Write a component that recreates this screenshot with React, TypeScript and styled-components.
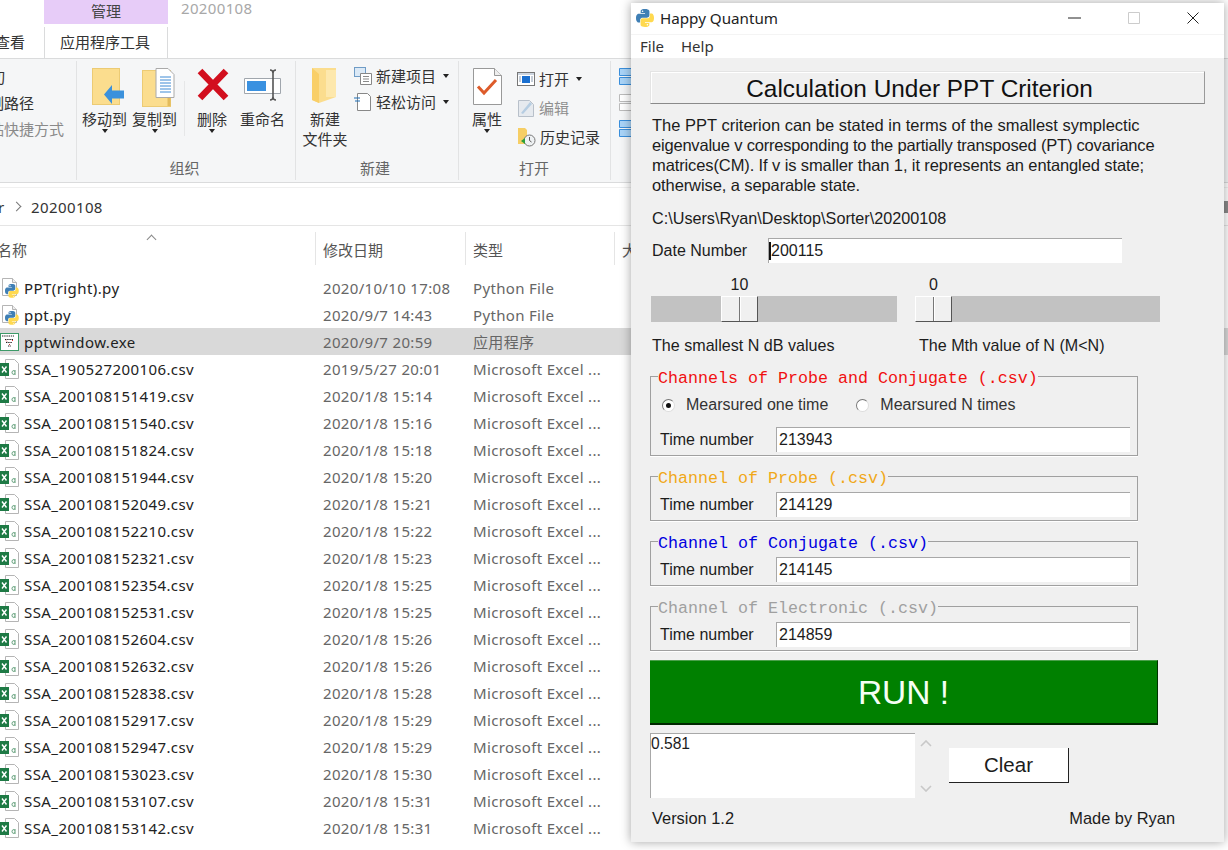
import React from 'react';
import styled, { createGlobalStyle } from 'styled-components';

const GlobalStyle = createGlobalStyle`
  * { box-sizing: border-box; }
  html, body { margin: 0; padding: 0; background: #fff; overflow: hidden; }
`;

const Desktop = styled.div`
  position: relative;
  width: 1228px;
  height: 850px;
  overflow: hidden;
  background: #fff;
  font-family: 'Noto Sans', 'Noto Sans CJK SC', sans-serif;
`;

/* ---------- explorer behind the window ---------- */

const CJK = `'Noto Sans CJK SC', 'Noto Sans', sans-serif`;

const ContextStrip = styled.div`
  display: flex;
  height: 24px;
  padding-left: 44px;
`;

const ManageTab = styled.div`
  width: 124px;
  background: #e7ccf8;
  color: #444;
  font: 15px/22px ${CJK};
  text-align: center;
`;

const FolderTitle = styled.div`
  margin-left: 13px;
  margin-top: -4px;
  color: #a8a8a8;
  font-size: 15px;
  line-height: 24px;
  letter-spacing: 0.35px;
`;

const TabStrip = styled.div`
  display: flex;
  height: 34px;
  margin-left: -6px;
`;

const Tab = styled.div<{ $active?: boolean; $width: number; $ml?: number }>`
  flex: none;
  width: ${(p) => p.$width}px;
  margin: 3px 0 0 ${(p) => p.$ml ?? 0}px;
  padding-right: ${(p) => (p.$active ? 2 : 0)}px;
  background: #fff;
  color: #333;
  font: 15px/30px ${CJK};
  text-align: center;
  white-space: nowrap;
  border: solid ${(p) => (p.$active ? '#dadbdc' : 'transparent')};
  border-width: 0 1px;
`;

const Ribbon = styled.div`
  display: flex;
  height: 125px;
  background: #f5f6f7;
  border-top: 1px solid #dadbdc;
  border-bottom: 1px solid #dadbdc;
  font: 15px/20px ${CJK};
  color: #333;
`;

const RibbonGroup = styled.div<{ $width: number }>`
  position: relative;
  display: flex;
  flex-direction: column;
  flex: none;
  width: ${(p) => p.$width}px;
  height: 119px;
  margin-top: 2px;
  border-right: 1px solid #e2e3e4;
`;

const GroupBody = styled.div<{ $left?: number }>`
  display: flex;
  flex: 1;
  padding: 7px 0 0 ${(p) => p.$left ?? 0}px;
`;

const GroupLabel = styled.div<{ $shift?: number }>`
  height: 22px;
  padding-right: ${(p) => p.$shift ?? 0}px;
  color: #666;
  text-align: center;
`;

const LargeButton = styled.div<{ $width: number; $ml?: number }>`
  display: flex;
  flex-direction: column;
  align-items: center;
  flex: none;
  width: ${(p) => p.$width}px;
  margin-left: ${(p) => p.$ml ?? 0}px;
  white-space: nowrap;
  text-align: center;
`;

const LargeIcon = styled.div<{ $shift?: number }>`
  display: flex;
  align-items: flex-start;
  justify-content: center;
  height: 41px;
  margin-left: ${(p) => p.$shift ?? 0}px;
`;

const Caret = styled.span`
  display: block;
  flex: none;
  width: 0;
  height: 0;
  border: 3.5px solid transparent;
  border-top: 4px solid #222;
  border-bottom: 0;
`;

const RibbonDivider = styled.div`
  flex: none;
  width: 1px;
  height: 55px;
  margin: 13px 12px 0 7px;
  background: #e6e7e8;
`;

const CutLines = styled.div`
  display: flex;
  flex-direction: column;
  gap: 6px;
  margin-top: -1px;
  white-space: nowrap;
`;

const CutLine = styled.div<{ $indent: number; $muted?: boolean }>`
  margin-left: ${(p) => p.$indent}px;
  color: ${(p) => (p.$muted ? '#8a8a8a' : '#333')};
`;

const SideColumn = styled.div<{ $ml: number; $gap: number; $mt: number }>`
  display: flex;
  flex-direction: column;
  gap: ${(p) => p.$gap}px;
  margin: ${(p) => p.$mt}px 0 0 ${(p) => p.$ml}px;
`;

const SideItem = styled.div<{ $muted?: boolean; $ml?: number }>`
  display: flex;
  align-items: center;
  gap: 4px;
  height: 20px;
  margin-left: ${(p) => p.$ml ?? 0}px;
  color: ${(p) => (p.$muted ? '#8f8f8f' : '#333')};
  white-space: nowrap;
  ${Caret} { margin-left: 3px; }
`;

const AddressBar = styled.div`
  display: flex;
  align-items: center;
  height: 39px;
  margin-top: 4px;
  border-top: 1px solid #f0f0f0;
  border-bottom: 1px solid #e5e5e5;
  color: #333;
  font-size: 15px;
  letter-spacing: 0.4px;
`;

const Crumb = styled.span`
  margin-left: -2px;
  width: 12px;
`;

const Chevron = styled.span`
  display: block;
  width: 7px;
  height: 7px;
  margin: 0 11px 0 3px;
  border: solid #777;
  border-width: 1.5px 1.5px 0 0;
  transform: rotate(45deg);
`;

const SearchEdge = styled.span`
  width: 4px;
  height: 12px;
  margin-left: auto;
  background: #8a8a8a;
`;

const ListHeader = styled.div`
  position: relative;
  display: grid;
  grid-template-columns: 323px 150px 149px 40px;
  height: 35px;
  margin-top: 6px;
  color: #555;
  font: 15px/35px ${CJK};
`;

const HeaderCell = styled.div`
  position: relative;
`;

const HeaderName = styled.span`
  margin-left: -3px;
`;

const HeaderSep = styled.span`
  position: absolute;
  top: 0;
  right: 7px;
  width: 1px;
  height: 33px;
  background: #e5e5e5;
`;

const SortArrow = styled.span`
  position: absolute;
  top: 4px;
  left: 148px;
  width: 7px;
  height: 7px;
  border: solid #888;
  border-width: 1px 0 0 1px;
  transform: rotate(45deg);
`;

const FileList = styled.div`
  margin-top: 7px;
`;

const FileRow = styled.div<{ $selected?: boolean }>`
  display: grid;
  grid-template-columns: 24px 299px 150px 1fr;
  align-items: center;
  height: 27px;
  background: ${(p) => (p.$selected ? '#d9d9d9' : 'transparent')};
  font-size: 15px;
`;

const FileIconCell = styled.div`
  display: flex;
  align-items: center;
  height: 27px;
`;

const FileName = styled.div`
  color: #222;
  letter-spacing: 0.42px;
`;

const FileMeta = styled.div`
  color: #666;
  letter-spacing: 0.33px;
`;

/* ---------- the Happy Quantum window ---------- */

const AppWindow = styled.div`
  position: absolute;
  left: 631px;
  top: 3px;
  width: 593px;
  height: 839px;
  background: #f0f0f0;
  box-shadow: 0 0 10px rgba(0, 0, 0, 0.36);
  font-family: 'Liberation Sans', Arial, sans-serif;
  color: #1c1c1c;
`;

const TitleBar = styled.div`
  display: flex;
  align-items: center;
  height: 32px;
  padding: 0 2px 2px 5px;
  background: #fff;
  border-bottom: 1px solid #f4f4f4;
  font: 15.2px/30px 'Noto Sans', sans-serif;
  color: #222;
`;

const WindowTitle = styled.span`
  margin-left: 6px;
  flex: 1;
`;

const WindowControl = styled.div`
  display: flex;
  align-items: center;
  justify-content: center;
  width: 59px;
  height: 30px;
`;

const MenuBar = styled.div`
  display: flex;
  gap: 17px;
  height: 23px;
  padding-left: 9px;
  background: #fff;
  font: 15px/23px 'Noto Sans', sans-serif;
  color: #333;
`;

const WindowBody = styled.div`
  padding: 13px 0 0 19px;
  font-size: 16px;
  line-height: 20px;
`;

const Heading = styled.div`
  width: 555px;
  height: 33px;
  padding-right: 16px;
  background: #f0f0f0;
  border: 1px solid;
  border-color: #e4e4e4 #9a9a9a #8a8a8a #e4e4e4;
  box-shadow: inset 1px 1px 0 #fff;
  color: #111;
  font-size: 24.4px;
  line-height: 33px;
  text-align: center;
`;

const Description = styled.div`
  margin: 11px 0 0 2px;
  font-size: 16.5px;
`;

const DescriptionLine = styled.div<{ $spacing: number }>`
  letter-spacing: ${(p) => p.$spacing}px;
  white-space: nowrap;
`;

const PathText = styled.div`
  margin: 13px 0 0 2px;
  font-size: 16.2px;
`;

const FieldRow = styled.div<{ $mt?: number; $ml?: number }>`
  display: flex;
  align-items: center;
  margin: ${(p) => p.$mt ?? 0}px 0 0 ${(p) => p.$ml ?? 0}px;
`;

const FieldLabel = styled.div<{ $width: number }>`
  flex: none;
  width: ${(p) => p.$width}px;
`;

const TextField = styled.div<{ $width: number }>`
  position: relative;
  flex: none;
  width: ${(p) => p.$width}px;
  height: 25px;
  padding-left: 2px;
  background: #fff;
  border-top: 1px solid #a8a8a8;
  border-left: 1px solid #a8a8a8;
  line-height: 24px;
  font-size: 16px;
`;

const TextCursor = styled.span`
  position: absolute;
  left: 0;
  top: 3px;
  width: 2px;
  height: 18px;
  background: #111;
`;

const SliderGrid = styled.div`
  display: grid;
  grid-template-columns: 246px 245px;
  gap: 18px;
  margin: 12px 0 0 1px;
`;

const SliderValue = styled.div<{ $pos: number }>`
  width: 37px;
  margin-left: ${(p) => p.$pos}px;
  text-align: center;
  margin-bottom: 1px;
`;

const SliderTrack = styled.div`
  height: 26px;
  background: #c2c2c2;
`;

const SliderThumb = styled.div<{ $pos: number }>`
  width: 37px;
  height: 26px;
  margin-left: ${(p) => p.$pos}px;
  background: linear-gradient(90deg, #f0f0f0 0 17px, #777 17px 18px, #fff 18px 19px, #f0f0f0 19px);
  border: 1px solid;
  border-color: #fff #555 #555 #fff;
`;

const SliderCaptions = styled.div`
  display: grid;
  grid-template-columns: 267px 260px;
  margin: 13px 0 0 2px;
  font-size: 16.1px;
`;

const Group = styled.fieldset<{ $mt: number }>`
  width: 488px;
  margin: ${(p) => p.$mt}px 0 0;
  padding: 0 0 3px 9px;
  border: 1px solid #a0a0a0;
  box-shadow: 0 1px 0 #fff;
`;

const Legend = styled.legend<{ $color: string }>`
  position: relative;
  top: 1px;
  margin-left: -2px;
  padding: 3px 0 0;
  color: ${(p) => p.$color};
  font-family: 'Liberation Mono', monospace;
  font-size: 16.67px;
  line-height: 20px;
`;

const RadioRow = styled.div`
  display: flex;
  align-items: center;
  height: 20px;
  margin: 7px 0 0 2px;
  color: #333;
`;

const Radio = styled.span<{ $checked?: boolean; $ml?: number }>`
  display: flex;
  align-items: center;
  justify-content: center;
  flex: none;
  width: 13px;
  height: 13px;
  margin: 0 11px 0 ${(p) => p.$ml ?? 0}px;
  background: #fff;
  border: 1px solid;
  border-color: #777 #ddd #ddd #777;
  border-radius: 50%;
  &::after {
    content: '';
    display: ${(p) => (p.$checked ? 'block' : 'none')};
    width: 5px;
    height: 5px;
    background: #111;
    border-radius: 50%;
  }
`;

const RunButton = styled.div`
  width: 508px;
  height: 65px;
  margin-top: 9px;
  background: #008000;
  border-top: 1px solid #4aa04a;
  border-right: 1px solid #003000;
  border-bottom: 2px solid #002800;
  color: #f4fff4;
  font-size: 33.5px;
  line-height: 64px;
  text-align: center;
`;

const OutputRow = styled.div`
  display: flex;
  margin-top: 8px;
`;

const OutputBox = styled.div`
  flex: none;
  width: 265px;
  height: 65px;
  background: #fff;
  border-top: 1px solid #a8a8a8;
  border-left: 1px solid #a8a8a8;
  font-size: 15.6px;
  line-height: 20px;
`;

const ScrollColumn = styled.div`
  display: flex;
  flex-direction: column;
  justify-content: space-between;
  align-items: center;
  width: 18px;
  height: 52px;
  margin: 7px 0 0 2px;
`;

const ClearButton = styled.div`
  width: 120px;
  height: 35px;
  margin: 15px 0 0 14px;
  background: #fff;
  border-right: 1px solid #222;
  border-bottom: 1px solid #222;
  font-size: 20.5px;
  line-height: 34px;
  text-align: center;
`;

const FooterRow = styled.div`
  display: flex;
  justify-content: space-between;
  width: 523px;
  margin: 10px 0 0 2px;
  font-size: 16.4px;
`;

/* ---------- drawings ---------- */

const PY_PATH =
  'M54.9 0C26.9 0 28.6 12.2 28.6 12.2v12.6h26.7v3.8H18S0 26.6 0 54.9s15.7 27.3 15.7 27.3h9.4V69s-.5-15.7 15.4-15.7h26.6s14.9.2 14.9-14.4V14.8S84.3 0 54.9 0zM40.1 8.5a4.8 4.8 0 1 1 0 9.6 4.8 4.8 0 0 1 0-9.6z';

const PythonLogo = ({ size }: { size: number }) => (
  <svg width={size} height={size} viewBox="0 0 110 110">
    <path fill="#3f7fb5" d={PY_PATH} />
    <path fill="#ffd94f" d={PY_PATH} transform="rotate(180 55 55)" />
  </svg>
);

const PyFileIcon = () => (
  <svg width="20" height="20" viewBox="0 0 20 20">
    <path d="M2.5.5h10l4 4v13h-14z" fill="#fff" stroke="#b5b5b5" />
    <path d="M12.5.5v4h4" fill="#eee" stroke="#b5b5b5" />
    <g transform="translate(5 6) scale(.125)">
      <path fill="#3f7fb5" d={PY_PATH} />
      <path fill="#ffd94f" d={PY_PATH} transform="rotate(180 55 55)" />
    </g>
  </svg>
);

const ExcelIcon = () => (
  <svg width="20" height="20" viewBox="0 0 20 20">
    <path d="M5.5.5h9l4 4v15h-13z" fill="#fff" stroke="#b5b5b5" />
    <rect x="0" y="4" width="9" height="13" fill="#1e7a45" />
    <path d="M2 7.5l4.5 6M6.5 7.5l-4.5 6" stroke="#fff" strokeWidth="1.4" />
    <path d="M15 11v5m0-3.5c-1-1.5-3-1-3 1s2 2.5 3 1" stroke="#5c9c75" fill="none" />
  </svg>
);

const ExeIcon = () => (
  <svg width="20" height="20" viewBox="0 0 20 20">
    <rect x=".5" y="1.5" width="18" height="17" fill="#fff" stroke="#3d9a68" />
    <path d="M2 4h12M5 7.5h8M6 10.5h6M8 14h3" stroke="#222" strokeWidth="1.1" strokeDasharray="1.4 .8" />
    <path d="M6 8.5l1 1M12 8l1 1M9 12l1 1" stroke="#d33" />
  </svg>
);

const Folder = ({ width, height }: { width: number; height: number }) => (
  <rect x=".5" y=".5" width={width} height={height} fill="#fbdd8e" stroke="#eccb74" />
);

const MoveIcon = () => (
  <svg width="33" height="38" viewBox="0 0 33 38">
    <Folder width={27} height={36} />
    <path d="M12 26.5L20 17v5.5h12v8H20V36z" fill="#3b91dc" />
  </svg>
);

const CopyIcon = () => (
  <svg width="34" height="40" viewBox="0 0 34 40">
    <g transform="translate(0 2)"><Folder width={28} height={36} /></g>
    <path d="M27 29v9" stroke="#e3bb5c" strokeWidth="3" />
    <path d="M14 .5h12l6 6v23H14z" fill="#fff" stroke="#aaa" />
    <path d="M18 9h11M18 12h11M18 15h11M18 18h11M18 21h11M18 24h11" stroke="#3f8ad4" />
  </svg>
);

const DeleteIcon = () => (
  <svg width="32" height="33" viewBox="0 0 32 33">
    <path d="M3 3l26 27M29 3L3 30" stroke="#d20f1e" strokeWidth="6.5" />
  </svg>
);

const RenameIcon = () => (
  <svg width="37" height="35" viewBox="0 0 37 35">
    <path d="M.5 10.5h36v15H.5z" fill="#fff" stroke="#a0a6ad" />
    <rect x="3" y="13" width="19" height="10" fill="#3a91e0" />
    <path d="M26 2c2 0 3 1 3 3v24c0 2 1 3 3 3M32 2c-2 0-3 1-3 3M26 32c2 0 3-1 3-3" fill="none" stroke="#555" strokeWidth="1.6" />
  </svg>
);

const NewFolderIcon = () => (
  <svg width="26" height="36" viewBox="0 0 26 36">
    <path d="M0 0h24v29l-17 6-7-3z" fill="#fbdd8e" />
    <path d="M0 0l7 6v29l-7-3z" fill="#f9cf68" />
    <path d="M14 2h10v27h-10z" fill="#fde8ad" />
  </svg>
);

const NewItemIcon = () => (
  <svg width="18" height="18" viewBox="0 0 18 18">
    <rect x=".5" y=".5" width="11" height="9" fill="#dbe9f6" stroke="#6f9cc6" />
    <path d="M6.5 6.5h11v11h-11z" fill="#fff" stroke="#888" />
    <path d="M9 9.5h6M9 12h6M9 14.5h6" stroke="#8a8a8a" />
  </svg>
);

const EasyAccessIcon = () => (
  <svg width="18" height="18" viewBox="0 0 18 18">
    <path d="M3.5.5h10l3 3v14h-13z" fill="#fff" stroke="#888" />
    <path d="M0 5h6M1 8h5" stroke="#1f6fb5" strokeWidth="1.2" />
  </svg>
);

const PropertiesIcon = () => (
  <svg width="29" height="37" viewBox="0 0 29 37">
    <path d="M.5.5h21l7 7v29H.5z" fill="#fff" stroke="#999" />
    <path d="M21.5.5v7h7" fill="#eee" stroke="#999" />
    <path d="M5 18.5l6 6.5 12-13" fill="none" stroke="#dd5b2a" strokeWidth="3" />
  </svg>
);

const OpenIcon = () => (
  <svg width="18" height="14" viewBox="0 0 18 14">
    <rect x=".5" y=".5" width="17" height="13" fill="#fff" stroke="#777" />
    <rect x="1" y="1" width="16" height="2" fill="#ccd5e0" />
    <rect x="5" y="4" width="8" height="7" fill="#1a6fd0" />
    <path d="M2 5h2M2 7h2M2 9h2M14 5h2M14 7h2M14 9h2" stroke="#8a9bb0" />
  </svg>
);

const EditIcon = () => (
  <svg width="17" height="18" viewBox="0 0 17 18">
    <path d="M.5 1.5h11l4 4v12H.5z" fill="#e6eaef" stroke="#b8c0ca" />
    <path d="M3 14l9-11 2 2-9 10z" fill="#b6cde2" />
  </svg>
);

const HistoryIcon = () => (
  <svg width="18" height="19" viewBox="0 0 18 19">
    <path d="M0 0h7l2 2v14H0z" fill="#f6ce65" />
    <circle cx="11.5" cy="12.5" r="5.5" fill="#eef1f3" stroke="#777" />
    <path d="M11.5 9v3.5l2 1.5" stroke="#555" fill="none" />
    <path d="M3 13l4-3v6z" fill="#2da03a" />
  </svg>
);

const GridIcon = ({ muted }: { muted?: boolean }) => (
  <svg width="14" height="18" viewBox="0 0 14 18">
    <path d="M.5.5h13v7H.5zM.5 9.5h13v7H.5z" fill={muted ? '#fff' : '#a9d4f8'} stroke={muted ? '#bbb' : '#3a8fdc'} />
  </svg>
);

const MinimizeIcon = () => (
  <svg width="13" height="2" viewBox="0 0 13 2"><path d="M0 1h13" stroke="#222" /></svg>
);

const MaximizeIcon = () => (
  <svg width="12" height="12" viewBox="0 0 12 12"><path d="M.5.5h11v11H.5z" fill="none" stroke="#ccc" /></svg>
);

const CloseIcon = () => (
  <svg width="12" height="12" viewBox="0 0 12 12"><path d="M.5.5l11 11M11.5.5l-11 11" stroke="#222" /></svg>
);

const ScrollChevron = ({ up }: { up?: boolean }) => (
  <svg width="12" height="7" viewBox="0 0 12 7">
    <path d={up ? 'M1 6l5-5 5 5' : 'M1 1l5 5 5-5'} fill="none" stroke="#c8c8c8" strokeWidth="1.6" />
  </svg>
);

/* ---------- data ---------- */

const csvFiles: [string, string][] = [
  ['SSA_190527200106.csv', '2019/5/27 20:01'],
  ['SSA_200108151419.csv', '2020/1/8 15:14'],
  ['SSA_200108151540.csv', '2020/1/8 15:16'],
  ['SSA_200108151824.csv', '2020/1/8 15:18'],
  ['SSA_200108151944.csv', '2020/1/8 15:20'],
  ['SSA_200108152049.csv', '2020/1/8 15:21'],
  ['SSA_200108152210.csv', '2020/1/8 15:22'],
  ['SSA_200108152321.csv', '2020/1/8 15:23'],
  ['SSA_200108152354.csv', '2020/1/8 15:25'],
  ['SSA_200108152531.csv', '2020/1/8 15:25'],
  ['SSA_200108152604.csv', '2020/1/8 15:26'],
  ['SSA_200108152632.csv', '2020/1/8 15:26'],
  ['SSA_200108152838.csv', '2020/1/8 15:28'],
  ['SSA_200108152917.csv', '2020/1/8 15:29'],
  ['SSA_200108152947.csv', '2020/1/8 15:29'],
  ['SSA_200108153023.csv', '2020/1/8 15:30'],
  ['SSA_200108153107.csv', '2020/1/8 15:31'],
  ['SSA_200108153142.csv', '2020/1/8 15:31'],
];

const channels = [
  { title: 'Channel of Probe (.csv)', color: '#f0a818', value: '214129', mt: 9 },
  { title: 'Channel of Conjugate (.csv)', color: '#0000e0', value: '214145', mt: 9 },
  { title: 'Channel of Electronic (.csv)', color: '#a0a0a0', value: '214859', mt: 9 },
];

const descriptionLines: [string, number][] = [
  ['The PPT criterion can be stated in terms of the smallest symplectic', 0],
  ['eigenvalue v corresponding to the partially transposed (PT) covariance', -0.2],
  ['matrices(CM). If v is smaller than 1, it represents an entangled state;', -0.11],
  ['otherwise, a separable state.', -0.1],
];

const Explorer = () => (
  <div>
    <ContextStrip>
      <ManageTab>管理</ManageTab>
      <FolderTitle>20200108</FolderTitle>
    </ContextStrip>
    <TabStrip>
      <Tab $width={32}>查看</Tab>
      <Tab $width={124} $ml={18} $active>应用程序工具</Tab>
    </TabStrip>
    <Ribbon>
      <RibbonGroup $width={77}>
        <GroupBody>
          <CutLines>
            <CutLine $indent={-25}>剪切</CutLine>
            <CutLine $indent={-26}>复制路径</CutLine>
            <CutLine $indent={-26} $muted>粘贴快捷方式</CutLine>
          </CutLines>
        </GroupBody>
      </RibbonGroup>
      <RibbonGroup $width={219}>
        <GroupBody $left={5}>
          <LargeButton $width={45}>
            <LargeIcon $shift={8}><MoveIcon /></LargeIcon>
            移动到
            <Caret />
          </LargeButton>
          <LargeButton $width={45} $ml={5}>
            <LargeIcon $shift={9}><CopyIcon /></LargeIcon>
            复制到
            <Caret />
          </LargeButton>
          <RibbonDivider />
          <LargeButton $width={30}>
            <LargeIcon $shift={2}><DeleteIcon /></LargeIcon>
            删除
            <Caret />
          </LargeButton>
          <LargeButton $width={45} $ml={13}>
            <LargeIcon><RenameIcon /></LargeIcon>
            重命名
          </LargeButton>
        </GroupBody>
        <GroupLabel $shift={3}>组织</GroupLabel>
      </RibbonGroup>
      <RibbonGroup $width={163}>
        <GroupBody $left={6}>
          <LargeButton $width={46}>
            <LargeIcon><NewFolderIcon /></LargeIcon>
            新建<br />文件夹
          </LargeButton>
          <SideColumn $ml={6} $gap={6} $mt={-2}>
            <SideItem><NewItemIcon />新建项目<Caret /></SideItem>
            <SideItem><EasyAccessIcon />轻松访问<Caret /></SideItem>
          </SideColumn>
        </GroupBody>
        <GroupLabel $shift={4}>新建</GroupLabel>
      </RibbonGroup>
      <RibbonGroup $width={152}>
        <GroupBody $left={13}>
          <LargeButton $width={30}>
            <LargeIcon><PropertiesIcon /></LargeIcon>
            属性
            <Caret />
          </LargeButton>
          <SideColumn $ml={15} $gap={9} $mt={1}>
            <SideItem><OpenIcon />打开<Caret /></SideItem>
            <SideItem $muted $ml={1}><EditIcon />编辑</SideItem>
            <SideItem $ml={1}><HistoryIcon />历史记录</SideItem>
          </SideColumn>
        </GroupBody>
        <GroupLabel $shift={1}>打开</GroupLabel>
      </RibbonGroup>
      <RibbonGroup $width={40}>
        <GroupBody $left={8}>
          <SideColumn $ml={0} $gap={8} $mt={0}>
            <GridIcon />
            <GridIcon muted />
            <GridIcon />
          </SideColumn>
        </GroupBody>
      </RibbonGroup>
    </Ribbon>
    <AddressBar>
      <Crumb>r</Crumb>
      <Chevron />
      20200108
      <SearchEdge />
    </AddressBar>
    <ListHeader>
      <HeaderCell>
        <HeaderName>名称</HeaderName>
        <SortArrow />
        <HeaderSep />
      </HeaderCell>
      <HeaderCell>修改日期<HeaderSep /></HeaderCell>
      <HeaderCell>类型<HeaderSep /></HeaderCell>
      <HeaderCell>大</HeaderCell>
    </ListHeader>
    <FileList>
      <FileRow>
        <FileIconCell><PyFileIcon /></FileIconCell>
        <FileName>PPT(right).py</FileName>
        <FileMeta>2020/10/10 17:08</FileMeta>
        <FileMeta>Python File</FileMeta>
      </FileRow>
      <FileRow>
        <FileIconCell><PyFileIcon /></FileIconCell>
        <FileName>ppt.py</FileName>
        <FileMeta>2020/9/7 14:43</FileMeta>
        <FileMeta>Python File</FileMeta>
      </FileRow>
      <FileRow $selected>
        <FileIconCell><ExeIcon /></FileIconCell>
        <FileName>pptwindow.exe</FileName>
        <FileMeta>2020/9/7 20:59</FileMeta>
        <FileMeta>应用程序</FileMeta>
      </FileRow>
      {csvFiles.map(([name, date]) => (
        <FileRow key={name}>
          <FileIconCell><ExcelIcon /></FileIconCell>
          <FileName>{name}</FileName>
          <FileMeta>{date}</FileMeta>
          <FileMeta>Microsoft Excel ...</FileMeta>
        </FileRow>
      ))}
    </FileList>
  </div>
);

const QuantumWindow = () => (
  <AppWindow>
    <TitleBar>
      <PythonLogo size={18} />
      <WindowTitle>Happy Quantum</WindowTitle>
      <WindowControl><MinimizeIcon /></WindowControl>
      <WindowControl><MaximizeIcon /></WindowControl>
      <WindowControl><CloseIcon /></WindowControl>
    </TitleBar>
    <MenuBar>
      <span>File</span>
      <span>Help</span>
    </MenuBar>
    <WindowBody>
      <Heading>Calculation Under PPT Criterion</Heading>
      <Description>
        {descriptionLines.map(([text, spacing]) => (
          <DescriptionLine key={text} $spacing={spacing}>{text}</DescriptionLine>
        ))}
      </Description>
      <PathText>C:\Users\Ryan\Desktop\Sorter\20200108</PathText>
      <FieldRow $mt={10} $ml={2}>
        <FieldLabel $width={116}>Date Number</FieldLabel>
        <TextField $width={354}><TextCursor />200115</TextField>
      </FieldRow>
      <SliderGrid>
        <div>
          <SliderValue $pos={70}>10</SliderValue>
          <SliderTrack><SliderThumb $pos={70} /></SliderTrack>
        </div>
        <div>
          <SliderValue $pos={0}>0</SliderValue>
          <SliderTrack><SliderThumb $pos={0} /></SliderTrack>
        </div>
      </SliderGrid>
      <SliderCaptions>
        <span>The smallest N dB values</span>
        <span>The Mth value of N (M&lt;N)</span>
      </SliderCaptions>
      <Group $mt={10}>
        <Legend $color="#f01010">Channels of Probe and Conjugate (.csv)</Legend>
        <RadioRow>
          <Radio $checked />Mearsured one time
          <Radio $ml={28} />Mearsured N times
        </RadioRow>
        <FieldRow $mt={12}>
          <FieldLabel $width={116}>Time number</FieldLabel>
          <TextField $width={354}>213943</TextField>
        </FieldRow>
      </Group>
      {channels.map((c) => (
        <Group key={c.title} $mt={c.mt}>
          <Legend $color={c.color}>{c.title}</Legend>
          <FieldRow $mt={4}>
            <FieldLabel $width={116}>Time number</FieldLabel>
            <TextField $width={354}>{c.value}</TextField>
          </FieldRow>
        </Group>
      ))}
      <RunButton>RUN !</RunButton>
      <OutputRow>
        <OutputBox>0.581</OutputBox>
        <ScrollColumn>
          <ScrollChevron up />
          <ScrollChevron />
        </ScrollColumn>
        <ClearButton>Clear</ClearButton>
      </OutputRow>
      <FooterRow>
        <span>Version 1.2</span>
        <span>Made by Ryan</span>
      </FooterRow>
    </WindowBody>
  </AppWindow>
);

export default function App() {
  return (
    <Desktop>
      <GlobalStyle />
      <Explorer />
      <QuantumWindow />
    </Desktop>
  );
}
